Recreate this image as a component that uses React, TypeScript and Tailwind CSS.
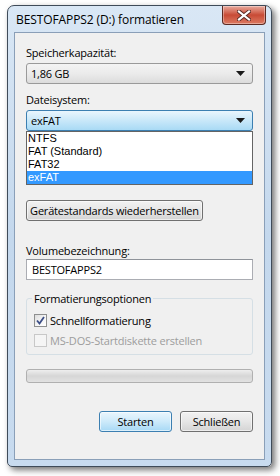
import React from "react";

const font = "font-['Segoe_UI','Open_Sans','Noto_Sans',sans-serif]";

const Arrow: React.FC = () => (
  <svg width="9" height="5" viewBox="0 0 9 5">
    <path d="M0 0 H9 L4.5 5 Z" fill="#1a1a1a" />
  </svg>
);

const CheckBox: React.FC<{ checked?: boolean; disabled?: boolean }> = ({ checked, disabled }) => (
  <div
    className={`w-[13px] h-[13px] border flex items-center justify-center shrink-0 ${
      disabled
        ? "border-[#c8c8c8] bg-[#f5f5f5]"
        : "border-[#8e8f8f] bg-gradient-to-br from-[#dcdcdc] via-[#f4f4f4] to-white"
    }`}
  >
    {checked && (
      <svg width="9" height="9" viewBox="0 0 9 9">
        <path d="M1 4.5 L3.5 7.5 L8 1" fill="none" stroke="#3c4e86" strokeWidth="1.8" />
      </svg>
    )}
  </div>
);

export default function App() {
  const options = ["NTFS", "FAT (Standard)", "FAT32", "exFAT"];

  return (
    <div className={`w-[280px] h-[476px] bg-white pt-[5px] pl-[7px] overflow-hidden ${font}`}>
      {/* Window */}
      <div className="w-[265px] h-[462px] rounded-t-[7px] rounded-b-[5px] border border-[#3f4b59] bg-gradient-to-b from-[#d9e7f5] via-[#c4d8ed] to-[#c8dbef] shadow-[3px_3px_6px_rgba(0,0,0,0.55)] flex flex-col px-[6px] pb-[6px]">
        {/* Title bar */}
        <div className="h-[26px] flex items-start justify-between shrink-0">
          <span className="mt-[6px] ml-[2px] text-[12px] leading-[15px] tracking-[-0.1px] text-black">
            BESTOFAPPS2 (D:) formatieren
          </span>
          <div className="w-[44px] h-[19px] -mr-[1px] rounded-b-[4px] border border-t-0 border-[#5c2a22] bg-gradient-to-b from-[#e7aa9e] via-[#c84a35] to-[#dc7a62] flex items-center justify-center shadow-[inset_0_0_0_1px_rgba(255,255,255,0.35)]">
            <svg width="14" height="11" viewBox="0 0 14 11">
              <path d="M2 1.5 L12 9.5 M12 1.5 L2 9.5" stroke="#5a2a24" strokeWidth="4" strokeLinecap="square" />
              <path d="M2 1.5 L12 9.5 M12 1.5 L2 9.5" stroke="#ffffff" strokeWidth="2.2" strokeLinecap="square" />
            </svg>
          </div>
        </div>

        {/* Client area */}
        <div className="flex-1 border border-[#8a9fb8] bg-[#f0f0f0] flex flex-col px-[11px] text-[11px] leading-[15px] tracking-[-0.2px] text-black">
          <span className="mt-[12px]">Speicherkapazität:</span>
          <div className="mt-[3px] h-[21px] rounded-[3px] border border-[#9a9a9a] bg-gradient-to-b from-[#f4f4f4] via-[#ebebeb] to-[#dcdcdc] flex items-center justify-between pl-[4px] pr-[7px]">
            <span>1,86 GB</span>
            <Arrow />
          </div>

          <span className="mt-[8px]">Dateisystem:</span>
          <div className="relative mt-[3px]">
            <div className="h-[21px] rounded-[3px] border border-[#3c7fb1] bg-gradient-to-b from-[#eaf6fd] via-[#c9e8f9] to-[#a9daf5] flex items-center justify-between pl-[4px] pr-[7px]">
              <span>exFAT</span>
              <Arrow />
            </div>
            {/* Dropdown list */}
            <div className="absolute left-0 right-0 top-[21px] z-10 bg-white border border-[#646464] flex flex-col font-['Liberation_Sans',Arial,sans-serif] text-[11px] leading-[13px] tracking-normal">
              {options.map((o) => (
                <div
                  key={o}
                  className={`h-[13px] pl-[1px] ${o === "exFAT" ? "bg-[#3399ff] text-white" : "text-black"}`}
                >
                  {o}
                </div>
              ))}
            </div>
          </div>

          <button className="mt-[69px] self-start w-[177px] h-[21px] whitespace-nowrap rounded-[3px] border border-[#707070] bg-gradient-to-b from-[#f2f2f2] via-[#e6e6e6] to-[#d4d4d4] shadow-[inset_0_0_0_1px_rgba(255,255,255,0.6)] text-[11px] leading-[15px] tracking-[-0.2px] text-black">
            Gerätestandards wiederherstellen
          </button>

          <span className="mt-[22px]">Volumebezeichnung:</span>
          <div className="mt-[1px] h-[21px] border border-[#abadb3] border-t-[#8f939a] bg-white flex items-center pl-[5px]">
            BESTOFAPPS2
          </div>

          {/* Group box */}
          <div className="relative mt-[18px] h-[57px] rounded-[3px] border border-[#d5dfe5] flex flex-col pl-[7px] pt-[14px] gap-[5px]">
            <span className="absolute -top-[8px] left-[5px] px-[2px] bg-[#f0f0f0]">Formatierungsoptionen</span>
            <div className="flex items-center gap-[3px]">
              <CheckBox checked />
              <span>Schnellformatierung</span>
            </div>
            <div className="flex items-center gap-[3px] text-[#9d9d9d]">
              <CheckBox disabled />
              <span>MS-DOS-Startdiskette erstellen</span>
            </div>
          </div>

          {/* Progress bar */}
          <div className="mt-[14px] h-[14px] rounded-[3px] border border-[#b0b0b0] bg-gradient-to-b from-[#eeeeee] via-[#d6d6d6] to-[#e2e2e2]" />

          {/* Buttons */}
          <div className="mt-[28px] flex justify-end gap-[8px]">
            <button className="w-[73px] h-[21px] rounded-[3px] border border-[#3c7fb1] bg-gradient-to-b from-[#eaf6fd] via-[#cdeafa] to-[#a7d9f5] shadow-[inset_0_0_0_1px_rgba(255,255,255,0.6)] text-[11px] leading-[15px] tracking-[-0.2px] text-black">
              Starten
            </button>
            <button className="w-[73px] h-[21px] rounded-[3px] border border-[#707070] bg-gradient-to-b from-[#f2f2f2] via-[#e6e6e6] to-[#d4d4d4] shadow-[inset_0_0_0_1px_rgba(255,255,255,0.6)] text-[11px] leading-[15px] tracking-[-0.2px] text-black">
              Schließen
            </button>
          </div>
        </div>
      </div>
    </div>
  );
}
